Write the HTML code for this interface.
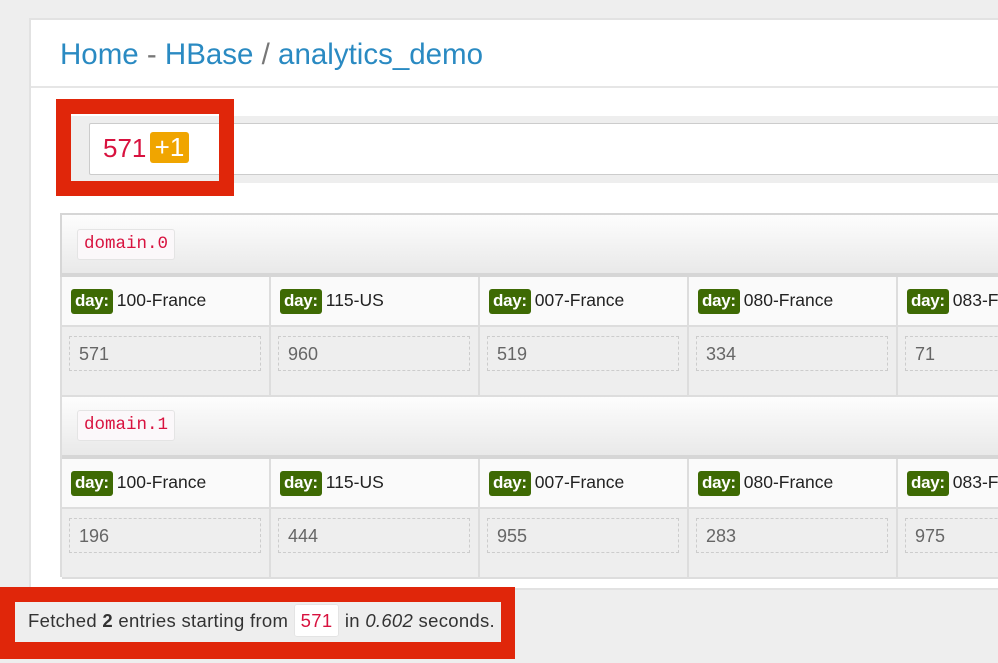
<!DOCTYPE html>
<html><head><style>
*{margin:0;padding:0;box-sizing:border-box}
body{width:998px;height:663px;overflow:hidden;background:#eee;font-family:"Liberation Sans",sans-serif;position:relative}
.a{position:absolute}
.card{left:29px;top:18px;width:980px;height:572px;background:#fff;border:2px solid #e2e2e2}
.title{left:60px;top:38px;font-size:29.5px;color:#2a8ac2;white-space:nowrap}
.title span{color:#777}
.code{font-family:"Liberation Mono",monospace;color:#d8123f;background:#fbf8fa;border:1px solid #e4e4e4;border-radius:3px}
.dom{left:60px;width:950px;height:64px;background:linear-gradient(#fdfdfd,#e9e9e9);border:2px solid #d6d6d6;border-bottom:4px solid #d6d6d6}
.hd{height:50px;background:#fafafa;border-right:2px solid #ddd;border-bottom:2px solid #ddd;font-size:17.5px;color:#222;padding:12px 0 0 9px;white-space:nowrap}
.lbl{display:inline-block;background:#3e6a04;color:#fff;border-radius:3px;padding:2px 4px 3px;font-weight:bold;font-size:17px;margin-right:4px;letter-spacing:-0.3px}
.vl{height:70px;background:#eee;border-right:2px solid #ddd;border-bottom:2px solid #ddd}
.db{position:absolute;left:7px;top:9px;width:192px;height:35px;border:1.5px dashed #ccc;font-size:18px;color:#666;padding:7px 0 0 9px}
</style></head><body>
<div class="a card"></div>
<div class="a title">Home <span>-</span> HBase <span>/</span> analytics_demo</div>
<div class="a" style="left:31px;top:86px;width:970px;height:2px;background:#e6e6e6"></div>
<div class="a" style="left:70px;top:116px;width:930px;height:67px;background:#eee"></div>
<div class="a" style="left:89px;top:123px;width:920px;height:52px;background:#fff;border:1.5px solid #ccc;border-radius:2px"></div>
<div class="a" style="left:103px;top:133px;font-size:26px;color:#d8123f">571</div>
<div class="a" style="left:150px;top:132px;width:39px;height:31px;background:#f0a500;border-radius:3px;color:#fff;font-size:26px;text-align:center;line-height:31px">+1</div>
<div class="a" style="left:56px;top:99px;width:178px;height:97px;border:15px solid #e0260a"></div>

<div class="a dom" style="top:213px"></div>
<div class="a code" style="left:77px;top:229px;font-size:17.5px;padding:4px 6px;height:31px">domain.0</div>
<div class="a dom" style="top:395px"></div>
<div class="a code" style="left:77px;top:410px;font-size:17.5px;padding:4px 6px;height:31px">domain.1</div>

<div class="a" style="left:60px;top:277px;width:960px;height:300px;border-left:2px solid #ddd"></div>
<div class="a" style="left:62px;top:277px;display:flex">
<div class="hd" style="width:209px"><span class="lbl">day:</span>100-France</div>
<div class="hd" style="width:209px"><span class="lbl">day:</span>115-US</div>
<div class="hd" style="width:209px"><span class="lbl">day:</span>007-France</div>
<div class="hd" style="width:209px"><span class="lbl">day:</span>080-France</div>
<div class="hd" style="width:209px"><span class="lbl">day:</span>083-France</div>
</div>
<div class="a" style="left:62px;top:327px;display:flex">
<div class="vl" style="width:209px;position:relative"><div class="db">571</div></div>
<div class="vl" style="width:209px;position:relative"><div class="db">960</div></div>
<div class="vl" style="width:209px;position:relative"><div class="db">519</div></div>
<div class="vl" style="width:209px;position:relative"><div class="db">334</div></div>
<div class="vl" style="width:209px;position:relative"><div class="db">71</div></div>
</div>
<div class="a" style="left:62px;top:459px;display:flex">
<div class="hd" style="width:209px"><span class="lbl">day:</span>100-France</div>
<div class="hd" style="width:209px"><span class="lbl">day:</span>115-US</div>
<div class="hd" style="width:209px"><span class="lbl">day:</span>007-France</div>
<div class="hd" style="width:209px"><span class="lbl">day:</span>080-France</div>
<div class="hd" style="width:209px"><span class="lbl">day:</span>083-France</div>
</div>
<div class="a" style="left:62px;top:509px;display:flex">
<div class="vl" style="width:209px;position:relative"><div class="db">196</div></div>
<div class="vl" style="width:209px;position:relative"><div class="db">444</div></div>
<div class="vl" style="width:209px;position:relative"><div class="db">955</div></div>
<div class="vl" style="width:209px;position:relative"><div class="db">283</div></div>
<div class="vl" style="width:209px;position:relative"><div class="db">975</div></div>
</div>

<div class="a" style="left:0;top:587px;width:515px;height:72px;background:#e0260a"></div>
<div class="a" style="left:15px;top:602px;width:486px;height:40px;background:#eee;font-size:18.5px;color:#333;padding:8px 0 0 13px;white-space:nowrap;letter-spacing:0.3px">Fetched <b>2</b> entries starting from <span class="code" style="font-family:'Liberation Sans',sans-serif;padding:5px 6px;background:#fff">571</span> in <i>0.602</i> seconds.</div>
</body></html>
